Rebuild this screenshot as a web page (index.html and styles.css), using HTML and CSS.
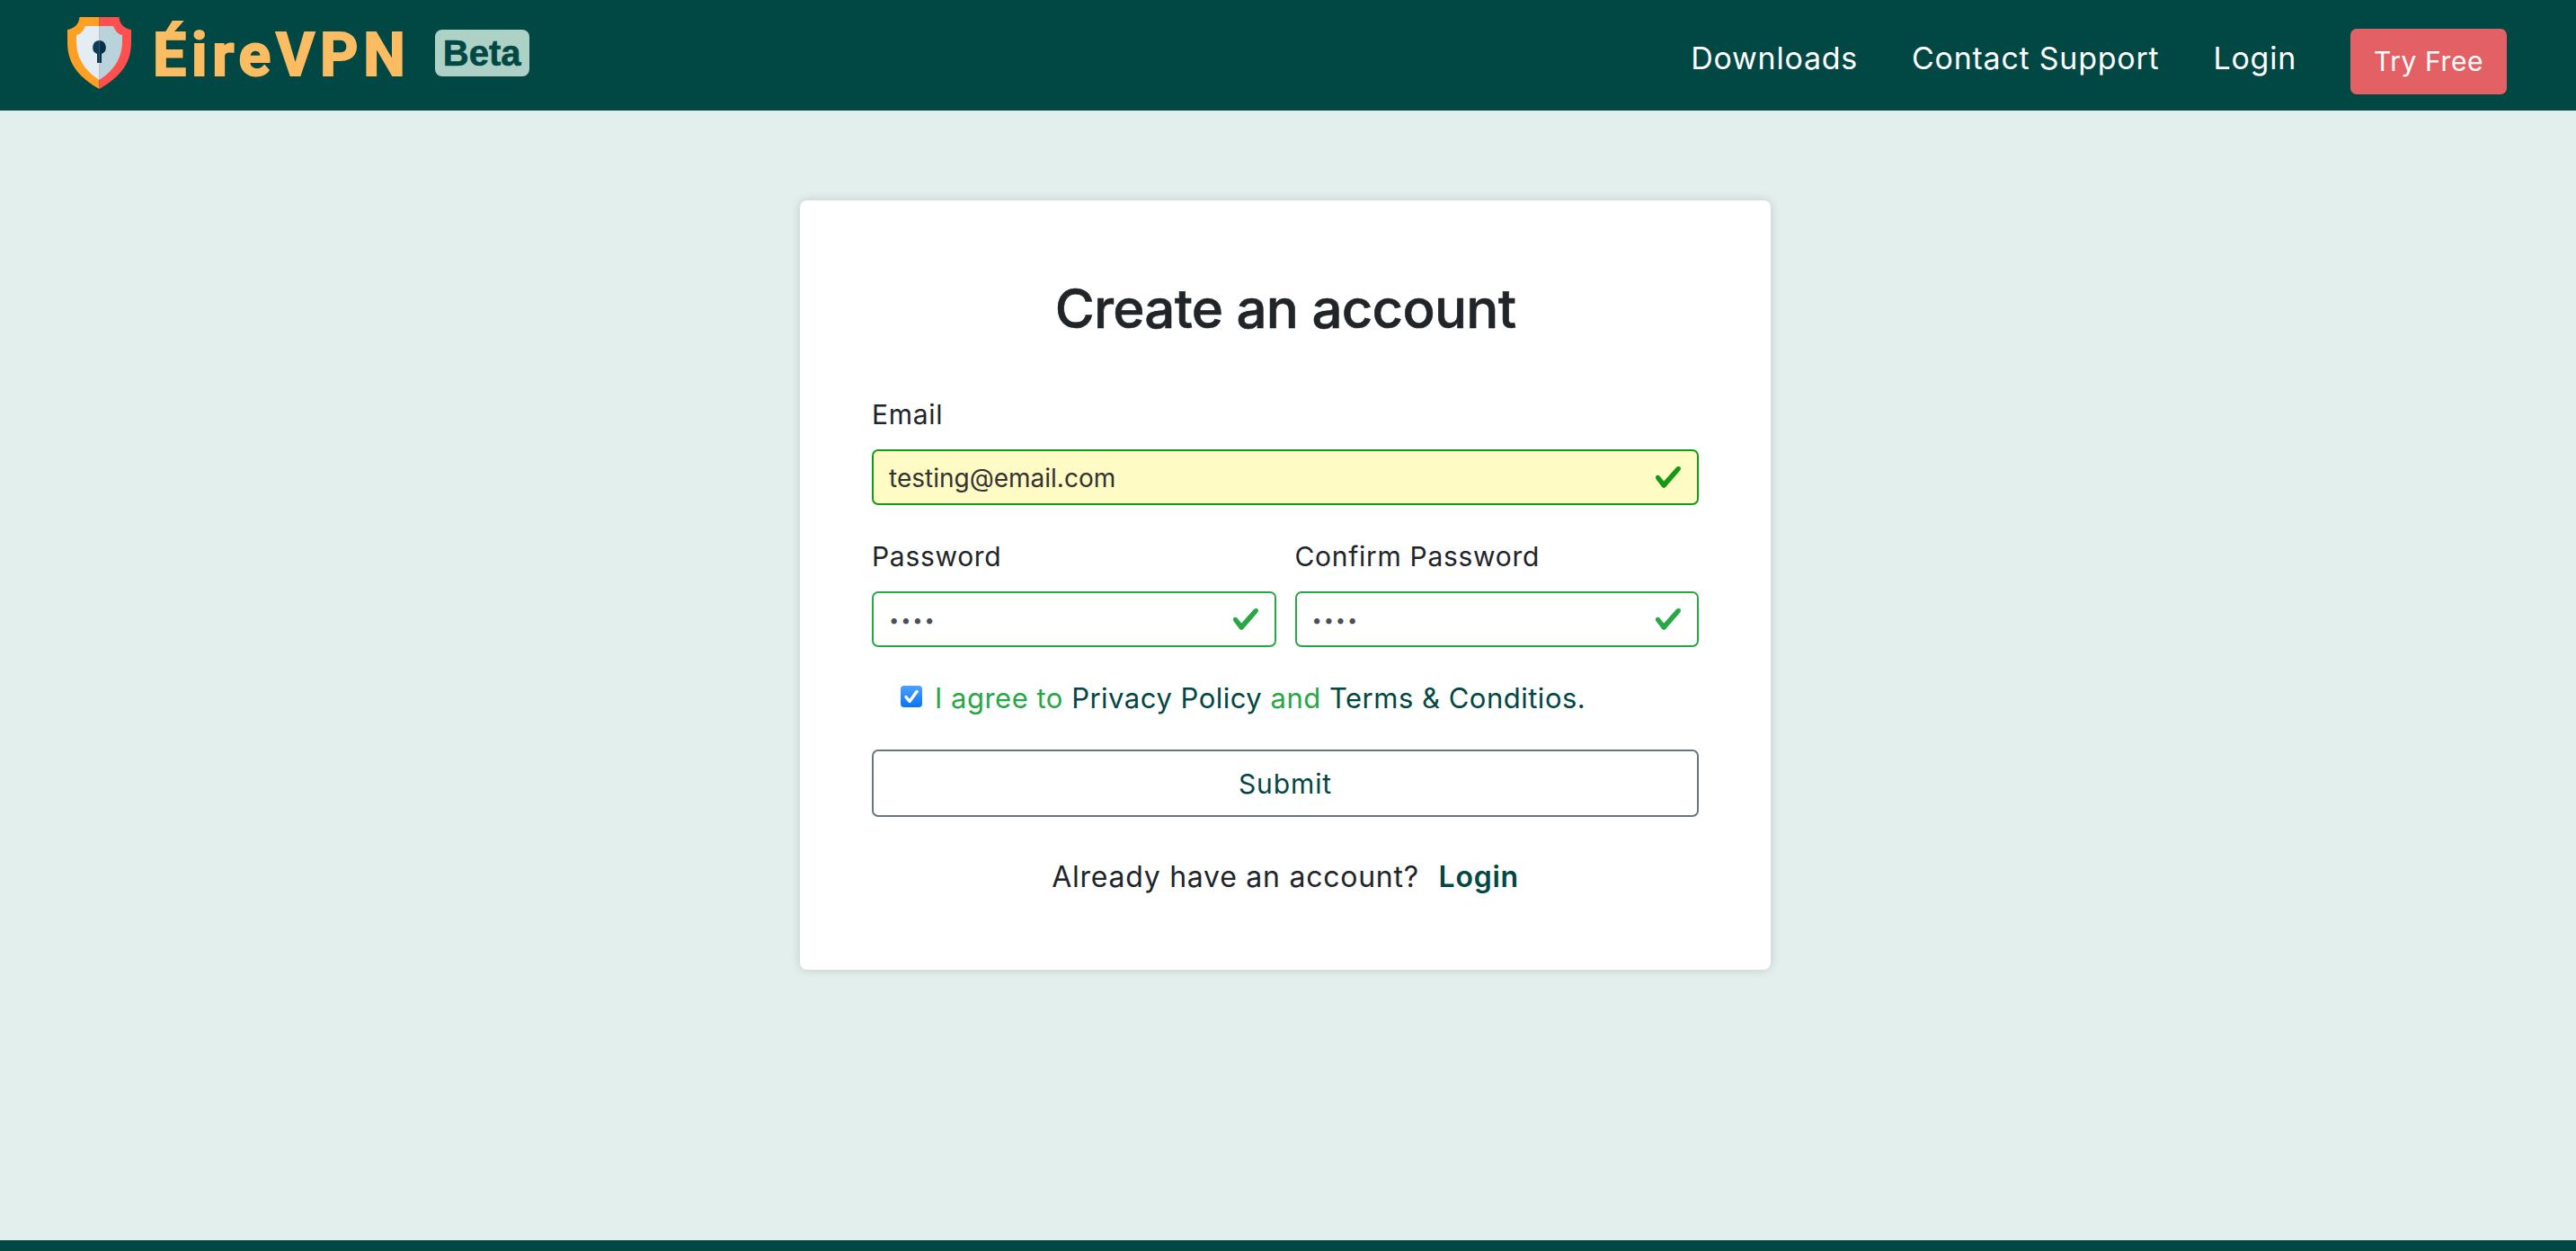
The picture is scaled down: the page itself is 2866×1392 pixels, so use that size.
FILE: index.html
```html
<!DOCTYPE html>
<html lang="en">
<head>
<meta charset="utf-8">
<title>ÉireVPN - Create an account</title>
<link rel="stylesheet" href="styles.css">
</head>
<body>
<header class="topbar">
  <a class="brand" href="#">
    <svg class="shield" viewBox="0 0 71 80" aria-hidden="true">
      <path fill="#ffa024" d="M13.5 0H35.5V80C15 68 0 54 0 28V14C7 13 13 8 13.5 0Z"/>
      <path fill="#ff4f4f" d="M57.5 0H35.5V80C56 68 71 54 71 28V14C64 13 58 8 57.5 0Z"/>
      <path fill="#e4edf4" d="M20 10H35.5V70C20 60 10 46 10 27V20C15 19 18 15 20 10Z"/>
      <path fill="#b8d4da" d="M51 10H35.5V70C51 60 61 46 61 27V20C56 19 53 15 51 10Z"/>
      <path fill="#0b3c5a" d="M35.5 26A7.8 7.8 0 0 0 33 41V51H35.5Z"/>
      <path fill="#06304a" d="M35.5 26A7.8 7.8 0 0 1 38 41V51H35.5Z"/>
    </svg>
    <span class="brand-name">ÉireVPN</span>
    <span class="brand-badge">Beta</span>
  </a>
  <nav class="nav">
    <a class="nav-link" href="#">Downloads</a>
    <a class="nav-link" href="#">Contact Support</a>
    <a class="nav-link" href="#">Login</a>
    <a class="nav-cta" href="#">Try Free</a>
  </nav>
</header>

<main class="content">
  <form class="card">
    <h1 class="card-title">Create an account</h1>

    <div class="field">
      <label class="field-label" for="email">Email</label>
      <div class="control">
        <input class="input input-autofill" id="email" type="email" value="testing@email.com">
        <svg class="check check-dark" viewBox="0 0 8 8" aria-hidden="true"><path d="M2.3 6.73L.6 4.53c-.4-1.04.46-1.4 1.1-.8l1.1 1.4 3.4-3.8c.6-.63 1.6-.27 1.2.7l-4 4.6c-.43.5-.8.4-1.1.1z"/></svg>
      </div>
    </div>

    <div class="field-row">
      <div class="field">
        <label class="field-label" for="password">Password</label>
        <div class="control">
          <input class="input input-secret" id="password" type="password" value="test">
          <svg class="check" viewBox="0 0 8 8" aria-hidden="true"><path d="M2.3 6.73L.6 4.53c-.4-1.04.46-1.4 1.1-.8l1.1 1.4 3.4-3.8c.6-.63 1.6-.27 1.2.7l-4 4.6c-.43.5-.8.4-1.1.1z"/></svg>
        </div>
      </div>
      <div class="field">
        <label class="field-label" for="confirm">Confirm Password</label>
        <div class="control">
          <input class="input input-secret" id="confirm" type="password" value="test">
          <svg class="check" viewBox="0 0 8 8" aria-hidden="true"><path d="M2.3 6.73L.6 4.53c-.4-1.04.46-1.4 1.1-.8l1.1 1.4 3.4-3.8c.6-.63 1.6-.27 1.2.7l-4 4.6c-.43.5-.8.4-1.1.1z"/></svg>
        </div>
      </div>
    </div>

    <label class="agree">
      <input class="agree-box" type="checkbox" checked>
      <span class="agree-text">I agree to <a class="agree-link" href="#">Privacy Policy</a> and <a class="agree-link" href="#">Terms &amp; Conditios.</a></span>
    </label>

    <button class="submit" type="button">Submit</button>

    <p class="signin">Already have an account? <a class="signin-link" href="#">Login</a></p>
  </form>
</main>

<footer class="footer"></footer>
</body>
</html>
```

FILE: styles.css
```css
* { box-sizing: border-box; }

html, body { height: 100%; }

body {
  margin: 0;
  min-height: 100vh;
  display: flex;
  flex-direction: column;
  background: #e3efec;
  color: #212529;
  font-family: Inter, "Liberation Sans", sans-serif;
  font-size: 30px;
  line-height: 40px;
}

a { text-decoration: none; }

.topbar {
  height: 123px;
  flex: none;
  display: flex;
  align-items: center;
  justify-content: space-between;
  padding: 0 77px 0 75px;
  background: #014743;
}

.brand {
  display: flex;
  align-items: center;
  height: 100%;
}

.shield {
  width: 71px;
  height: 80px;
  margin-top: -5px;
  flex: none;
}

.brand-name {
  margin-left: 24px;
  font-family: Roboto, sans-serif;
  font-weight: 700;
  font-size: 66px;
  line-height: 80px;
  letter-spacing: 5.8px;
  color: #fbbc62;
  -webkit-text-stroke: 2px #fbbc62;
}

.brand-badge {
  margin-left: 27px;
  margin-top: -5px;
  width: 105px;
  height: 52px;
  border-radius: 8px;
  background: #aed1c6;
  color: #014743;
  font-family: "Liberation Sans", sans-serif;
  font-weight: 700;
  font-size: 40px;
  line-height: 52px;
  text-align: center;
  -webkit-text-stroke: 0.6px #014743;
}

.nav {
  display: flex;
  align-items: center;
  gap: 60px;
  margin-top: 14px;
}

.nav-link {
  color: #fff;
  font-size: 34px;
  line-height: 40px;
  letter-spacing: 0.75px;
  margin-top: -7px;
}

.nav-cta {
  width: 174px;
  height: 73px;
  border-radius: 7px;
  background: #e36164;
  color: #fff;
  font-size: 30px;
  letter-spacing: 0.6px;
  line-height: 73px;
  text-align: center;
}

.content {
  flex: 1;
  display: flex;
  justify-content: center;
  align-items: flex-start;
  padding: 100px 6px 0 0;
}

.card {
  width: 1080px;
  height: 856px;
  padding: 80px 80px 0;
  background: #fff;
  border-radius: 8px;
  box-shadow: 0 0 12px rgba(0, 0, 0, 0.15);
}

.card-title {
  margin: 0 0 58px;
  font-size: 60px;
  font-weight: 500;
  line-height: 80px;
  letter-spacing: -0.75px;
  -webkit-text-stroke: 0.6px #212529;
  text-align: center;
}

.field-label {
  display: block;
  margin-bottom: 19px;
  letter-spacing: 0.7px;
}

.control { position: relative; }

.input {
  display: block;
  width: 100%;
  height: 62px;
  padding: 2px 60px 0 17px;
  border: 2px solid #28a745;
  border-radius: 7px;
  background: #fff;
  color: #495057;
  font-family: inherit;
  font-size: 28px;
  outline: none;
}

.input-autofill {
  background: #fffbc4;
  border-color: #159a15;
  color: #333;
}

.input-secret {
  font-size: 20px;
  letter-spacing: 1.9px;
}

.check {
  position: absolute;
  top: 15px;
  right: 18px;
  width: 32px;
  height: 32px;
  fill: #28a745;
}

.check-dark { fill: #159a15; }

.field-row {
  display: grid;
  grid-template-columns: 1fr 1fr;
  gap: 21px;
  margin-top: 37px;
}

.agree {
  display: flex;
  align-items: center;
  margin-top: 35px;
  padding-left: 32px;
  color: #28a745;
  font-size: 31px;
  letter-spacing: 0.5px;
}

.agree-box {
  appearance: none;
  flex: none;
  width: 24px;
  height: 24px;
  margin: -2px 14px 0 0;
  border-radius: 4px;
  background-image: url("data:image/svg+xml,%3Csvg xmlns='http://www.w3.org/2000/svg' viewBox='0 0 24 24'%3E%3Cpath d='M6 12.5l4 5 8-11' fill='none' stroke='%23fff' stroke-width='3.4' stroke-linecap='round' stroke-linejoin='round'/%3E%3C/svg%3E"), linear-gradient(#4ba3ff, #0a72f5);
}

.agree-text { padding-top: 2px; }

.agree-link { color: #014743; }

.submit {
  display: block;
  width: 100%;
  height: 75px;
  margin-top: 37px;
  border: 2px solid #6c757d;
  border-radius: 7px;
  background: #fff;
  color: #014743;
  font-family: inherit;
  font-size: 30px;
  letter-spacing: 0.9px;
}

.signin {
  margin: 47px 0 0;
  text-align: center;
  font-size: 32px;
  letter-spacing: 0.75px;
}

.signin-link {
  margin-left: 12px;
  color: #014743;
  font-weight: 600;
}

.footer {
  flex: none;
  height: 12px;
  background: #014743;
}
```
